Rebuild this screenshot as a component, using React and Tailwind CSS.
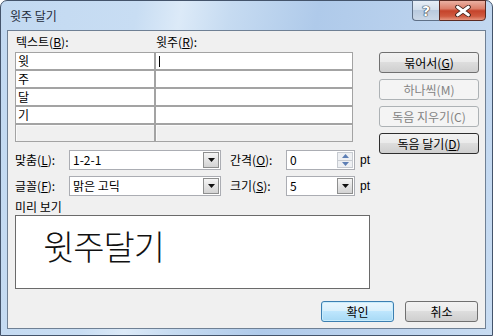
import React from 'react';

const KR = { fontFamily: '"Noto Sans CJK KR", "Noto Sans", sans-serif' };

function DropBtn() {
  return (
    <div className="flex h-[16px] w-[16px] items-center justify-center border border-[#8e8f8f] bg-[linear-gradient(#f5f5f5,#e4e4e4_50%,#d3d3d3)]">
      <svg width="7" height="4" viewBox="0 0 7 4">
        <path d="M0 0h7L3.5 4z" fill="#111" />
      </svg>
    </div>
  );
}

function Combo({ value, w }) {
  return (
    <div className={`flex h-[20px] items-center border border-[#abadb3] bg-white pl-[3px] pr-[1px] ${w}`}>
      <span className="flex-1 text-[12px] leading-none">{value}</span>
      <DropBtn />
    </div>
  );
}

function Spin({ value }) {
  return (
    <div className="flex h-[20px] w-[69px] items-center border border-[#abadb3] bg-white pl-[3px] pr-[1px]">
      <span className="flex-1 text-[12px] leading-none">{value}</span>
      <div className="flex h-[16px] w-[16px] flex-col border border-[#c7cbd1] bg-[#eef0f3]">
        <div className="flex flex-1 items-center justify-center border-b border-[#c7cbd1]">
          <svg width="7" height="4" viewBox="0 0 7 4">
            <path d="M0 4h7L3.5 0z" fill="#5d7fb5" />
          </svg>
        </div>
        <div className="flex flex-1 items-center justify-center">
          <svg width="7" height="4" viewBox="0 0 7 4">
            <path d="M0 0h7L3.5 4z" fill="#5d7fb5" />
          </svg>
        </div>
      </div>
    </div>
  );
}

function Btn({ children, disabled, dark, def, w = 'w-[100px]' }) {
  let tone = 'border-[#707070] text-black bg-[linear-gradient(#f2f2f2,#ebebeb_45%,#dddddd_50%,#cfcfcf)]';
  if (disabled) tone = 'border-[#adb2b5] text-[#838383] bg-[#f4f4f4]';
  if (dark) tone = 'border-[#2e2e2e] text-black bg-[linear-gradient(#f2f2f2,#ebebeb_45%,#dddddd_50%,#cfcfcf)]';
  if (def) tone = 'border-[#3c7fb1] text-black bg-[linear-gradient(#eaf6fd,#d9f0fc_45%,#bee6fd_50%,#a7d9f5)] shadow-[inset_0_0_0_1px_#c8ecfc]';
  return (
    <button className={`flex h-[21px] items-center justify-center rounded-[3px] border text-[12px] leading-none ${w} ${tone}`}>
      {children}
    </button>
  );
}

export default function App() {
  const rows = ['윗', '주', '달', '기'];
  return (
    <div style={KR} className="h-[336px] w-[493px] overflow-hidden bg-white text-black">
      <div className="flex h-[336px] w-[493px] flex-col rounded-t-[7px] border border-[#44546b] bg-[linear-gradient(100deg,#c2d9f1_0%,#c8ddf3_25%,#dceaf8_33%,#c6dbf1_42%,#afcaea_58%,#bcd3ee_80%,#c8dcf2_100%)]">
        {/* title bar */}
        <div className="flex h-[29px] items-start justify-between pl-[9px] pr-[6px]">
          <span className="mt-[8px] text-[12px] leading-[14px] text-[#1e2a3a]">윗주 달기</span>
          <div className="-mt-px flex h-[21px]">
            <div className="flex w-[27px] items-center justify-center rounded-bl-[4px] border border-r-0 border-[#5f7087] bg-[linear-gradient(#e6eef7,#d3dfec_45%,#b9cade_50%,#cbd8e7)]">
              <span className="text-[14px] font-bold leading-none text-white [text-shadow:0_0_1px_#1f2a38,0_0_1px_#1f2a38,0_0_1px_#1f2a38]" style={{ fontFamily: '"DejaVu Sans", sans-serif' }}>?</span>
            </div>
            <div className="flex w-[47px] items-center justify-center rounded-br-[4px] border border-[#5a2a22] bg-[linear-gradient(#eab0a2,#dc7f6a_40%,#c5432b_52%,#cf5a40_80%,#e69680)]">
              <svg width="16" height="12" viewBox="0 0 16 12">
                <path d="M2.5 2l11 8M13.5 2l-11 8" stroke="#3a1c16" strokeWidth="4.6" strokeLinecap="round" />
                <path d="M2.5 2l11 8M13.5 2l-11 8" stroke="#fff" strokeWidth="2.8" strokeLinecap="round" />
              </svg>
            </div>
          </div>
        </div>

        {/* client area */}
        <div className="mx-[6px] flex h-[299px] flex-col border border-[#6f8094] bg-[#f0f0f0]">
          <div className="flex pl-[7px] pt-[4px]">
            {/* left column */}
            <div className="flex w-[355px] flex-col">
              <div className="flex h-[14px] items-center text-[12px] leading-none">
                <span className="w-[141px] pl-[1px]">텍스트(<u>B</u>):</span>
                <span>윗주(<u>R</u>):</span>
              </div>
              <div className="mt-[3px] grid w-[338px] grid-cols-[140px_198px] text-[12px]">
                {rows.map((r, i) => (
                  <React.Fragment key={r}>
                    <div className="flex h-[18px] items-center border border-[#a3a3a3] bg-white pl-[2px] leading-none">{r}</div>
                    <div className="flex h-[18px] items-center border border-[#a3a3a3] bg-white pl-[3px]">
                      {i === 0 && <span className="h-[11px] w-px bg-black" />}
                    </div>
                  </React.Fragment>
                ))}
                <div className="h-[18px] border border-[#a3a3a3] bg-[#f0f0f0] shadow-[inset_1px_1px_0_#fafafa]" />
                <div className="h-[18px] border border-[#a3a3a3] bg-[#f0f0f0] shadow-[inset_1px_1px_0_#fafafa]" />
              </div>

              <div className="mt-[8px] flex items-center text-[12px] leading-none">
                <span className="w-[54px]">맞춤(<u>L</u>):</span>
                <Combo value="1-2-1" w="w-[152px]" />
                <span className="ml-[9px] w-[56px]">간격(<u>O</u>):</span>
                <Spin value="0" />
                <span className="ml-[5px]" style={{ fontFamily: '"Liberation Sans", sans-serif' }}>pt</span>
              </div>
              <div className="mt-[6px] flex items-center text-[12px] leading-none">
                <span className="w-[54px]">글꼴(<u>F</u>):</span>
                <Combo value="맑은 고딕" w="w-[152px]" />
                <span className="ml-[9px] w-[56px]">크기(<u>S</u>):</span>
                <Combo value="5" w="w-[69px]" />
                <span className="ml-[5px]" style={{ fontFamily: '"Liberation Sans", sans-serif' }}>pt</span>
              </div>

              <div className="mt-[4px] h-[15px] text-[12px] leading-[14px]">미리 보기</div>
              <div className="h-[74px] border border-[#6a6a6a] bg-white pl-[27px] pt-[13px]">
                <span className="text-[34px] font-light leading-none tracking-[-1px] text-[#111]">윗주달기</span>
              </div>
            </div>

            {/* right buttons */}
            <div className="ml-[9px] mt-[17px] flex flex-col gap-[6px]">
              <Btn>묶어서(<u>G</u>)</Btn>
              <Btn disabled>하나씩(M)</Btn>
              <Btn disabled>독음 지우기(C)</Btn>
              <Btn dark>독음 달기(<u>D</u>)</Btn>
            </div>
          </div>

          <div className="mt-[12px] flex justify-end gap-[11px] pr-[7px]">
            <Btn def w="w-[73px]">확인</Btn>
            <Btn w="w-[73px]">취소</Btn>
          </div>
        </div>
      </div>
    </div>
  );
}
